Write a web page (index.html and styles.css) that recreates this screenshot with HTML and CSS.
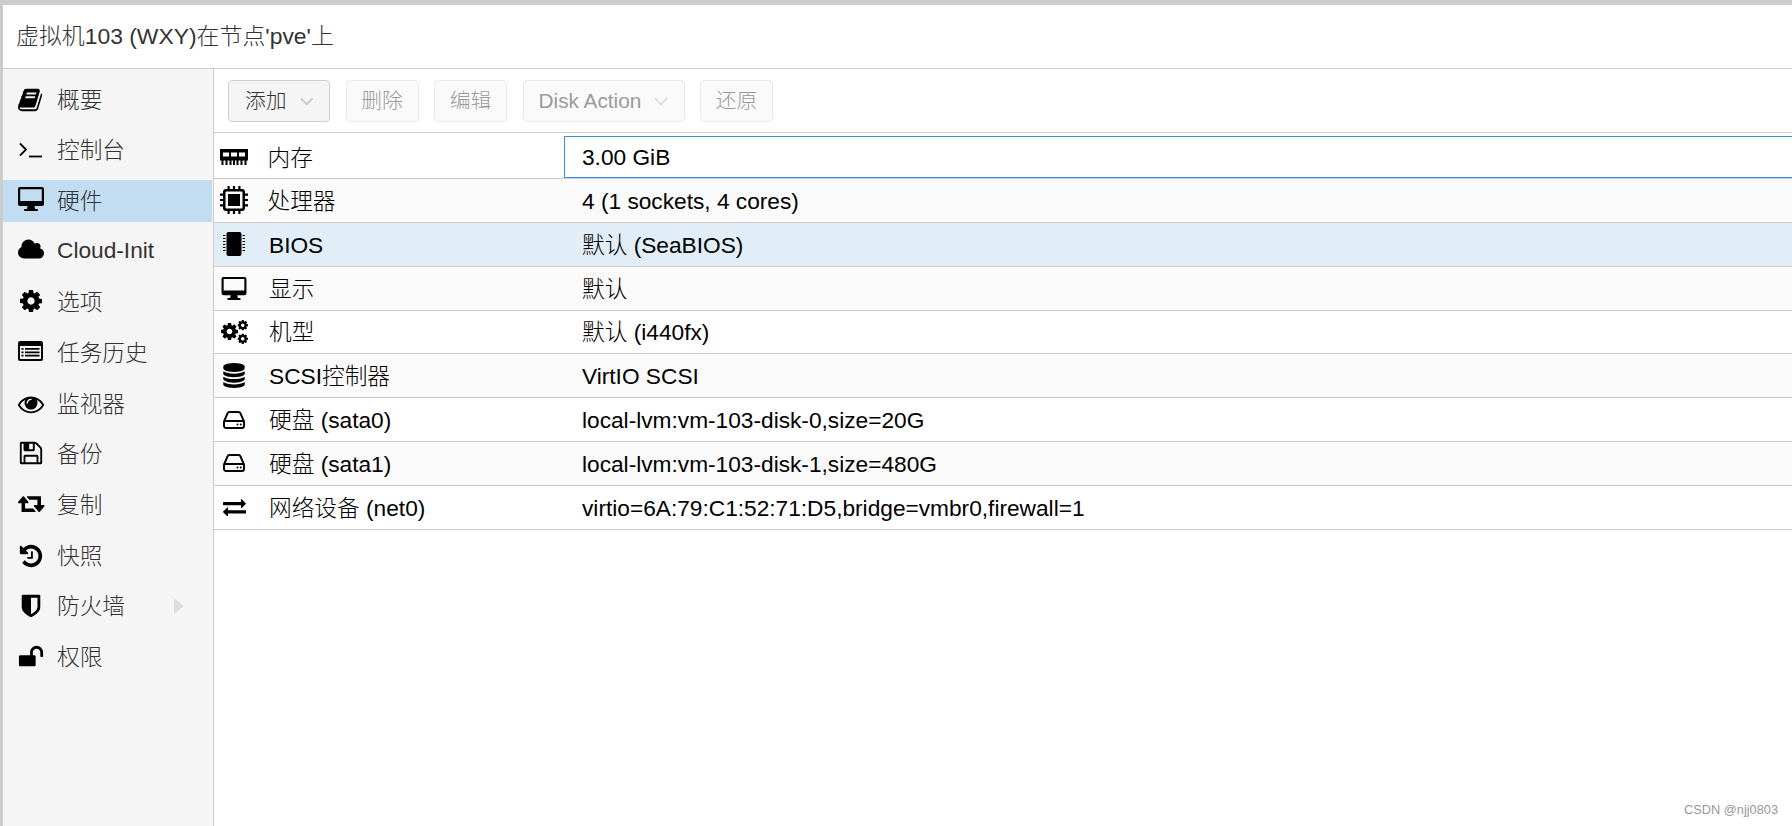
FILE: index.html
```html
<!DOCTYPE html>
<html lang="zh">
<head>
<meta charset="utf-8">
<title>虚拟机103</title>
<link rel="stylesheet" href="styles.css">
</head>
<body>
<svg class="defs" width="0" height="0" aria-hidden="true">
  <symbol id="cog" viewBox="128 128 1536 1536"><path d="M1152 896q0-106-75-181t-181-75-181 75-75 181 75 181 181 75 181-75 75-181zm512-109v222q0 12-8 23t-20 13l-185 28q-19 54-39 91 35 50 107 138 10 12 10 25t-9 23q-27 37-99 108t-94 71q-12 0-26-9l-138-108q-44 23-91 38-16 136-29 186-7 28-36 28h-222q-14 0-24.500-8.500t-11.500-21.500l-28-184q-49-16-90-37l-141 107q-10 9-25 9-14 0-25-11-126-114-165-168-7-10-7-23 0-12 8-23 15-21 51-66.500t54-70.500q-27-50-41-99l-183-27q-13-2-21-12.500t-8-23.500v-222q0-12 8-23t19-13l186-28q14-46 39-92-40-57-107-138-10-12-10-24 0-10 9-23 26-36 98.500-107.500t94.500-71.500q13 0 26 10l138 107q44-23 91-38 16-136 29-186 7-28 36-28h222q14 0 24.500 8.500t11.500 21.500l28 184q49 16 90 37l142-107q9-9 24-9 13 0 25 10 129 119 165 170 7 8 7 22 0 12-8 23-15 21-51 66.500t-54 70.500q26 50 41 98l183 28q13 2 21 12.500t8 23.500z"/></symbol>
  <symbol id="desktop" viewBox="0 0 26 24"><path fill-rule="evenodd" d="M2 0h22a2 2 0 0 1 2 2v15a2 2 0 0 1-2 2h-7.500l.5 3h2a1 1 0 0 1 0 2H7a1 1 0 0 1 0-2h2l.5-3H2a2 2 0 0 1-2-2V2a2 2 0 0 1 2-2zm.4 2.200a.2.2 0 0 0-.2.2V14h21.600V2.400a.2.2 0 0 0-.2-.2z"/></symbol>
  <symbol id="hdd" viewBox="0 0 22 18"><path fill="none" stroke="currentColor" stroke-width="1.900" stroke-linejoin="round" d="M1 10.500 4.500 2.500Q5 1 6.500 1h9q1.500 0 2 1.500L21 10.500V15a2 2 0 0 1-2 2H3a2 2 0 0 1-2-2zM1.500 10H20.500"/><circle cx="14.500" cy="13.500" r="1"/><circle cx="17.800" cy="13.500" r="1"/></symbol>
</svg>

<div class="window">
  <header class="title-bar">虚拟机103 (WXY)在节点'pve'上</header>
  <div class="content">
    <nav class="sidebar">
      <div class="nav-item">
        <svg class="icon" viewBox="0 0 1792 1792"><path d="M1639 478q40 57 18 129l-275 906q-19 64-76.500 107.500t-122.500 43.500h-923q-77 0-148.500-53.500t-99.500-131.500q-24-67-2-127 0-4 3-27t4-37q1-8-3-21.500t-3-19.500q2-11 8-21t16.500-23.500 16.500-23.500q23-38 45-91.500t30-91.500q3-10 .5-30t-.5-28q3-11 17-28t17-23q21-36 42-92t25-90q1-9-2.500-32t.5-28q4-13 22-30.500t22-22.500q19-26 42.500-84.500t27.500-96.500q1-8-3-25.500t-2-26.500q2-8 9-18t18-23 17-21q8-12 16.500-30.500t15-35 16-36 19.500-32 26.500-23.500 36-11.500 47.500 5.500l-1 3q38-9 51-9h761q74 0 114 56t18 130l-274 906q-36 119-71.500 153.500t-128.500 34.500h-869q-27 0-38 15-11 16-1 43 24 70 144 70h923q29 0 56-15.500t35-41.500l300-987q7-22 5-57 38 15 59 43zm-1064 2q-4 13 2 22.500t20 9.500h608q13 0 25.500-9.500t16.500-22.500l21-64q4-13-2-22.500t-20-9.500h-608q-13 0-25.500 9.500t-16.500 22.500zm-83 256q-4 13 2 22.500t20 9.500h608q13 0 25.500-9.500t16.500-22.500l21-64q4-13-2-22.500t-20-9.500h-608q-13 0-25.500 9.500t-16.500 22.500z"/></svg>
        <span>概要</span>
      </div>
      <div class="nav-item">
        <svg class="icon icon-terminal" viewBox="0 0 23 16"><path fill="none" stroke="currentColor" stroke-width="1.800" d="M1 1.500 7 7.500 1 13.500"/><path fill="none" stroke="currentColor" stroke-width="1.800" d="M10 14.500H23"/></svg>
        <span>控制台</span>
      </div>
      <div class="nav-item nav-selected">
        <svg class="icon icon-desktop"><use href="#desktop"/></svg>
        <span>硬件</span>
      </div>
      <div class="nav-item">
        <svg class="icon icon-cloud" viewBox="0 0 1920 1792"><path d="M1920 1216q0 159-112.500 271.500t-271.500 112.500h-1088q-185 0-316.500-131.500t-131.500-316.500q0-132 71-241.500t187-163.500q-2-28-2-43 0-212 150-362t362-150q158 0 286.500 88t187.500 230q70-62 166-62 106 0 181 75t75 181q0 75-41 138 129 30 213 134.500t84 239.500z"/></svg>
        <span class="nav-latin">Cloud-Init</span>
      </div>
      <div class="nav-item">
        <svg class="icon icon-cog"><use href="#cog"/></svg>
        <span>选项</span>
      </div>
      <div class="nav-item">
        <svg class="icon icon-list" viewBox="0 0 25 20"><path fill-rule="evenodd" d="M2 0h21a2 2 0 0 1 2 2v16a2 2 0 0 1-2 2H2a2 2 0 0 1-2-2V2a2 2 0 0 1 2-2zm0 5v12.600q0 .4.4.4h20.200q.4 0 .4-.4V5z"/><path d="M3.500 7h2v1.800h-2zM7 7h14.500v1.800H7zM3.500 10.400h2v1.800h-2zM7 10.400h14.500v1.800H7zM3.500 13.800h2v1.800h-2zM7 13.800h14.500v1.800H7z"/></svg>
        <span>任务历史</span>
      </div>
      <div class="nav-item">
        <svg class="icon" viewBox="0 0 1792 1792"><path d="M1664 960q-152-236-381-353 61 104 61 225 0 185-131.500 316.500t-316.500 131.500-316.500-131.500-131.500-316.500q0-121 61-225-229 117-381 353 133 205 333.500 326.500t434.500 121.500 434.500-121.500 333.500-326.500zm-720-384q0-20-14-34t-34-14q-125 0-214.500 89.500t-89.500 214.500q0 20 14 34t34 14 34-14 14-34q0-86 61-147t147-61q20 0 34-14t14-34zm848 384q0 34-20 69-140 230-376.500 368.500t-499.500 138.500-499.500-139-376.500-368q-20-35-20-69t20-69q140-229 376.500-368t499.500-139 499.500 139 376.500 368q20 35 20 69z"/></svg>
        <span>监视器</span>
      </div>
      <div class="nav-item">
        <svg class="icon icon-save" viewBox="0 0 1792 1792"><path d="M512 1536h768v-384h-768v384zm896 0h128v-896q0-14-10-38.500t-20-34.500l-281-281q-10-10-34-20t-39-10v416q0 40-28 68t-68 28h-576q-40 0-68-28t-28-68v-416h-128v1280h128v-416q0-40 28-68t68-28h832q40 0 68 28t28 68v416zm-384-928v-320q0-13-9.500-22.500t-22.500-9.500h-192q-13 0-22.500 9.500t-9.500 22.500v320q0 13 9.500 22.500t22.500 9.500h192q13 0 22.500-9.500t9.500-22.500zm640 32v928q0 40-28 68t-68 28h-1344q-40 0-68-28t-28-68v-1344q0-40 28-68t68-28h928q40 0 88 20t76 48l280 280q28 28 48 76t20 88z"/></svg>
        <span>备份</span>
      </div>
      <div class="nav-item">
        <svg class="icon icon-retweet" viewBox="64 0 1920 1792"><path d="M1344 1376q0 13-9.500 22.500t-22.500 9.500h-960q-8 0-13.500-2t-9-7-5.500-8-3-11.500-1-11.500v-600h-192q-26 0-45-19t-19-45q0-24 15-41l320-384q19-22 49-22t49 22l320 384q15 17 15 41 0 26-19 45t-45 19h-192v384h576q16 0 25 11l160 192q7 11 7 21zm640-416q0 24-15 41l-320 384q-20 23-49 23t-49-23l-320-384q-15-17-15-41 0-26 19-45t45-19h192v-384h-576q-16 0-25-12l-160-192q-7-9-7-20 0-13 9.500-22.500t22.500-9.500h960q8 0 13.500 2t9 7 5.500 8 3 11.500 1 11.500v600h192q26 0 45 19t19 45z"/></svg>
        <span>复制</span>
      </div>
      <div class="nav-item">
        <svg class="icon" viewBox="0 0 1792 1792"><path d="M1664 896q0 156-61 298t-164 245-245 164-298 61q-172 0-327-72.500t-264-204.500q-7-10-6.500-22.500t8.500-20.500l137-138q10-9 25-9 16 2 23 12 73 95 179 147t225 52q104 0 198.500-40.500t163.500-109.500 109.500-163.500 40.500-198.500-40.500-198.500-109.500-163.500-163.500-109.500-198.500-40.500q-98 0-188 35.500t-160 101.500l137 138q31 30 14 69-17 40-59 40h-448q-26 0-45-19t-19-45v-448q0-42 40-59 39-17 69 14l130 129q107-101 244.500-156.500t284.500-55.500q156 0 298 61t245 164 164 245 61 298zm-640-288v448q0 14-9 23t-23 9h-320q-14 0-23-9t-9-23v-64q0-14 9-23t23-9h224v-352q0-14 9-23t23-9h64q14 0 23 9t9 23z"/></svg>
        <span>快照</span>
      </div>
      <div class="nav-item">
        <svg class="icon" viewBox="0 0 1792 1792"><path d="M1344 960v-640h-448v1137q119-63 213-137 235-184 235-360zm192-768v768q0 86-33.500 170.500t-83 150-118 127.500-126.500 103-121 77.500-89.500 49.500-42.500 20q-12 6-26 6t-26-6q-16-7-42.500-20t-89.500-49.500-121-77.500-126.500-103-118-127.500-83-150-33.500-170.500v-768q0-26 19-45t45-19h1152q26 0 45 19t19 45z"/></svg>
        <span>防火墙</span>
        <i class="nav-arrow"></i>
      </div>
      <div class="nav-item">
        <svg class="icon" viewBox="0 0 1792 1792"><path d="M1728 576v256q0 26-19 45t-45 19h-64q-26 0-45-19t-19-45v-256q0-106-75-181t-181-75-181 75-75 181v192h96q40 0 68 28t28 68v576q0 40-28 68t-68 28h-960q-40 0-68-28t-28-68v-576q0-40 28-68t68-28h672v-192q0-185 131.500-316.500t316.500-131.500 316.500 131.500 131.500 316.500z"/></svg>
        <span>权限</span>
      </div>
    </nav>

    <main class="main">
      <div class="toolbar">
        <button class="btn btn-add">添加<svg class="chev" viewBox="0 0 15 9"><path d="M1 1 7.500 7.500 14 1"/></svg></button>
        <button class="btn btn-off">删除</button>
        <button class="btn btn-off btn-edit">编辑</button>
        <button class="btn btn-off btn-disk">Disk Action<svg class="chev" viewBox="0 0 15 9"><path d="M1 1 7.500 7.500 14 1"/></svg></button>
        <button class="btn btn-off btn-revert">还原</button>
      </div>
      <div class="grid">
        <div class="row row-first">
          <div class="name">
            <span class="ico ico-mem"><svg class="hw-mem" viewBox="0 0 28 16"><path fill-rule="evenodd" d="M0 0h28v11.500H0zm3 3.500v4h6v-4zm8 0v4h6v-4zm8 0v4h6v-4z"/><path d="M1.500 11h2v5h-2zM5.500 11h2v5h-2zM9.500 11h2v5h-2zM13 11h2v5h-2zM16.500 11h2v5h-2zM20.500 11h2v5h-2zM24.500 11h2v5h-2z"/></svg></span>
            <span class="name-text name-tight name-low">内存</span>
          </div>
          <div class="value value-focus">3.00 GiB</div>
        </div>
        <div class="row row-alt">
          <div class="name">
            <span class="ico"><svg class="hw-cpu" viewBox="0 0 28 28"><path fill-rule="evenodd" d="M6 3h16a3 3 0 0 1 3 3v16a3 3 0 0 1-3 3H6a3 3 0 0 1-3-3V6a3 3 0 0 1 3-3zm.5 2.500a1 1 0 0 0-1 1v15a1 1 0 0 0 1 1h15a1 1 0 0 0 1-1v-15a1 1 0 0 0-1-1z"/><path d="M8 8h12v12H8zM7.500 0h2.200v3H7.500zM12.900 0h2.200v3h-2.200zM18.300 0h2.200v3h-2.200zM7.500 25h2.200v3H7.500zM12.900 25h2.200v3h-2.200zM18.300 25h2.200v3h-2.200zM0 7.500h3v2.200H0zM0 12.900h3v2.200H0zM0 18.300h3v2.200H0zM25 7.500h3v2.200h-3zM25 12.900h3v2.200h-3zM25 18.300h3v2.200h-3z"/></svg></span>
            <span class="name-text name-tight">处理器</span>
          </div>
          <div class="value">4 (1 sockets, 4 cores)</div>
        </div>
        <div class="row row-sel">
          <div class="name">
            <span class="ico"><svg class="hw-bios" viewBox="0 0 22 24"><rect x="3.500" width="15" height="24" rx="2"/><path d="M0 3h2.500v1H0zM0 6h2.500v1H0zM0 9h2.500v1H0zM0 12h2.500v1H0zM0 15h2.500v1H0zM0 18h2.500v1H0zM19.500 3H22v1h-2.500zM19.500 6H22v1h-2.500zM19.500 9H22v1h-2.500zM19.500 12H22v1h-2.500zM19.500 15H22v1h-2.500zM19.500 18H22v1h-2.500z"/></svg></span>
            <span class="name-text">BIOS</span>
          </div>
          <div class="value">默认 (SeaBIOS)</div>
        </div>
        <div class="row row-alt">
          <div class="name">
            <span class="ico"><svg class="hw-desktop"><use href="#desktop"/></svg></span>
            <span class="name-text">显示</span>
          </div>
          <div class="value">默认</div>
        </div>
        <div class="row">
          <div class="name">
            <span class="ico"><svg class="hw-gears" viewBox="0 0 27 24"><use href="#cog" x="0" y="3" width="17" height="17"/><use href="#cog" x="16.500" y="0" width="10.500" height="10.500"/><use href="#cog" x="16.500" y="13.500" width="10.500" height="10.500"/></svg></span>
            <span class="name-text">机型</span>
          </div>
          <div class="value">默认 (i440fx)</div>
        </div>
        <div class="row row-alt">
          <div class="name">
            <span class="ico"><svg class="hw-db" viewBox="128 0 1536 1792"><path d="M896 768q237 0 443-43t325-127v170q0 69-103 128t-280 93.500-385 34.500-385-34.500-280-93.500-103-128v-170q119 84 325 127t443 43zm0 768q237 0 443-43t325-127v170q0 69-103 128t-280 93.500-385 34.500-385-34.500-280-93.500-103-128v-170q119 84 325 127t443 43zm0-384q237 0 443-43t325-127v170q0 69-103 128t-280 93.500-385 34.500-385-34.500-280-93.500-103-128v-170q119 84 325 127t443 43zm0-1152q208 0 385 34.500t280 93.500 103 128v128q0 69-103 128t-280 93.500-385 34.500-385-34.500-280-93.500-103-128v-128q0-69 103-128t280-93.500 385-34.500z"/></svg></span>
            <span class="name-text">SCSI控制器</span>
          </div>
          <div class="value">VirtIO SCSI</div>
        </div>
        <div class="row">
          <div class="name">
            <span class="ico"><svg class="hw-hdd"><use href="#hdd"/></svg></span>
            <span class="name-text">硬盘 (sata0)</span>
          </div>
          <div class="value">local-lvm:vm-103-disk-0,size=20G</div>
        </div>
        <div class="row row-alt">
          <div class="name">
            <span class="ico"><svg class="hw-hdd"><use href="#hdd"/></svg></span>
            <span class="name-text">硬盘 (sata1)</span>
          </div>
          <div class="value">local-lvm:vm-103-disk-1,size=480G</div>
        </div>
        <div class="row">
          <div class="name">
            <span class="ico"><svg class="hw-net" viewBox="0 192 1792 1408"><path d="M1792 1184v192q0 13-9.500 22.500t-22.500 9.500h-1376v192q0 13-9.500 22.500t-22.500 9.500q-12 0-24-10l-319-320q-9-9-9-22 0-14 9-23l320-320q9-9 23-9 13 0 22.500 9.500t9.500 22.500v192h1376q13 0 22.500 9.500t9.500 22.500zm0-544q0 14-9 23l-320 320q-9 9-23 9-13 0-22.500-9.500t-9.500-22.500v-192h-1376q-13 0-22.500-9.500t-9.500-22.500v-192q0-13 9.500-22.500t22.500-9.500h1376v-192q0-14 9-23t23-9q12 0 24 10l319 319q9 9 9 23z"/></svg></span>
            <span class="name-text">网络设备 (net0)</span>
          </div>
          <div class="value">virtio=6A:79:C1:52:71:D5,bridge=vmbr0,firewall=1</div>
        </div>
      </div>
    </main>
  </div>
</div>
<div class="watermark">CSDN @njj0803</div>
</body>
</html>
```
FILE: styles.css
```css
* { box-sizing: border-box; }
html, body { height: 100%; }
body {
  margin: 0;
  padding: 5px 0 0 3px;
  background: #ccc;
  overflow: hidden;
  font-family: "Liberation Sans", "Noto Sans CJK SC", sans-serif;
  font-size: 22.7px;
  font-weight: 300;
  line-height: 28px;
  color: #000;
}
.defs { position: absolute; }
svg { fill: currentColor; display: block; }

.window { height: 821px; background: #fff; display: flex; flex-direction: column; }
.title-bar {
  height: 64px;
  flex: none;
  border-bottom: 1px solid #ccc;
  padding: 0 0 2px 13px;
  display: flex;
  align-items: center;
  font-size: 22.9px;
  color: #333;
  white-space: pre;
}
.content { flex: 1; display: flex; min-height: 0; }

.sidebar {
  width: 211px;
  flex: none;
  background: #f5f5f5;
  border-right: 1px solid #ccc;
  padding: 9.7px 1px 0 0;
  display: flex;
  flex-direction: column;
  gap: 8.67px;
}
.nav-item {
  height: 42px;
  flex: none;
  display: flex;
  align-items: center;
  color: #333;
  position: relative;
}
.nav-selected { background: #c2ddf2; }
.nav-item > span { margin-left: 54px; }
.nav-item > .nav-latin { padding-bottom: 3px; }
.nav-item .icon { position: absolute; left: 15px; top: 8px; width: 26px; height: 26px; color: #000; }
.nav-item .icon-desktop { height: 24px; top: 7px; }
.nav-item .icon-cloud { top: 5.500px; }
.nav-item .icon-cog { width: 22px; height: 22px; left: 17px; top: 9px; }
.nav-item .icon-list { width: 25px; height: 20px; top: 9px; }
.nav-item .icon-terminal { width: 23px; height: 16px; left: 16px; top: 12.500px; }
.nav-item .icon-save { top: 7px; }
.nav-item .icon-retweet { width: 26.500px; height: 26px; }
.nav-arrow {
  position: absolute;
  left: 171px;
  top: 13px;
  width: 0;
  height: 0;
  border-left: 10px solid #ddd;
  border-top: 8px solid transparent;
  border-bottom: 8px solid transparent;
}

.main { flex: 1; min-width: 0; background: #fff; }
.toolbar {
  height: 64px;
  border-bottom: 1px solid #ccc;
  padding: 1px 0 0 14px;
  display: flex;
  align-items: center;
  gap: 15.500px;
}
.btn {
  height: 42px;
  padding: 0 16px;
  border: 1px solid #cfcfcf;
  border-radius: 4px;
  background: #f5f5f5;
  font: inherit;
  font-size: 20.800px;
  color: #333;
  display: flex;
  align-items: center;
  white-space: nowrap;
}
.btn-add { width: 102px; }
.btn-off {
  width: 73px;
  background: #fafafa;
  border-color: #e9e9e9;
  color: #9a9a9a;
  justify-content: center;
}
.btn-disk { width: 162px; padding: 0 15px; justify-content: flex-start; }
.chev { width: 15px; height: 9px; margin-left: 13px; fill: none; stroke: #c8c8c8; stroke-width: 2; }
.btn-disk .chev { stroke: #dcdcdc; }

.grid { display: flex; flex-direction: column; }
.row {
  height: 43.850px;
  display: grid;
  grid-template-columns: 350px 1fr;
  align-items: stretch;
  border-bottom: 1px solid #ccc;
  background: #fff;
}
.row-first { height: 46px; }
.row-alt { background: #fafafa; }
.row-sel { background: #e1edf7; }
.name { display: flex; align-items: center; }
.ico { width: 40px; height: 30px; flex: none; display: flex; align-items: center; justify-content: center; }
.ico-mem { padding-top: 3px; }
.name-text { margin-left: 15px; padding-top: 1px; }
.name-tight { margin-left: 13.500px; }
.name-low { padding-top: 5px; }
.value { padding: 1px 0 0 18px; display: flex; align-items: center; white-space: pre; }
.value-focus {
  margin-top: 3px;
  padding-top: 0;
  border: 1px solid #3892d4;
  border-right: 0;
  padding-left: 17px;
}
.hw-mem { width: 28px; height: 16px; }
.hw-cpu { width: 28px; height: 28px; }
.hw-bios { width: 22px; height: 24px; }
.hw-desktop { width: 26px; height: 23px; }
.hw-gears { width: 27px; height: 24px; }
.hw-db { width: 22px; height: 25px; }
.hw-hdd { width: 22px; height: 18px; }
.hw-net { width: 25px; height: 18px; }

.watermark {
  position: absolute;
  left: 1684px;
  top: 802px;
  font-size: 12.800px;
  line-height: 16px;
  font-weight: 400;
  color: #999;
  white-space: nowrap;
}
```
